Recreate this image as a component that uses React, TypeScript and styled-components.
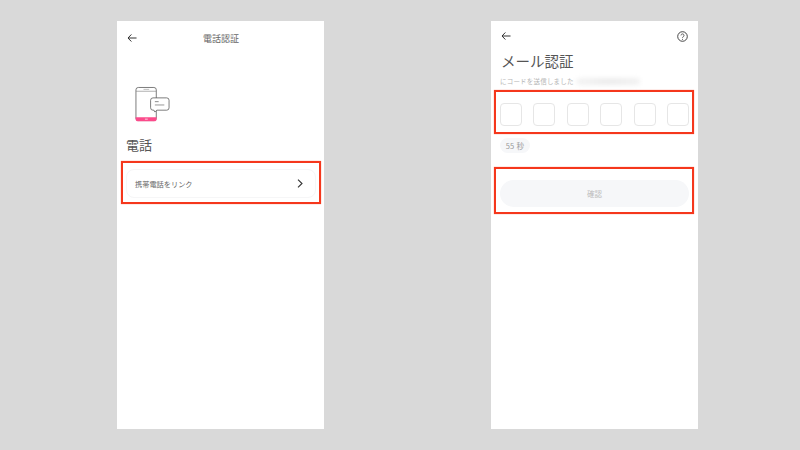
import styled, { createGlobalStyle } from 'styled-components'

const GlobalStyle = createGlobalStyle`
  html, body {
    margin: 0;
    padding: 0;
    background: #d9d9d9;
  }
  * {
    box-sizing: border-box;
  }
`

const Page = styled.div`
  width: 800px;
  height: 450px;
  overflow: hidden;
  display: flex;
  gap: 167px;
  padding: 21px 0 0 117px;
  background: #d9d9d9;
  font-family: 'Noto Sans CJK JP', 'Noto Sans', sans-serif;
`

const Screen = styled.div`
  width: 207px;
  height: 408px;
  background: #fff;
  display: flex;
  flex-direction: column;
`

const CenterHeader = styled.div`
  position: relative;
  height: 34px;
  margin-bottom: 2px;
  display: flex;
  align-items: center;
  justify-content: center;
  padding: 2px 0 0 1px;
`

const BackButton = styled.div`
  position: absolute;
  left: 10px;
  top: 12px;
  width: 10px;
  height: 10px;
  display: flex;
`

const HeaderTitle = styled.div`
  font-size: 9px;
  line-height: 12px;
  color: #666;
`

const PhoneArt = styled.div`
  margin: 29px 0 0 18px;
  width: 35px;
  height: 37px;
`

const SectionTitle = styled.div`
  margin: 13px 0 0 9px;
  font-size: 13px;
  line-height: 18px;
  color: #555;
`

const Highlight = styled.div<{ $h: number; $top: number; $left: number }>`
  margin: ${(p) => p.$top}px 0 0 ${(p) => p.$left}px;
  width: 200px;
  height: ${(p) => p.$h}px;
  border: 2px solid #f5371c;
  box-shadow: 0 0 1px rgba(245, 55, 28, 0.6);
  flex-shrink: 0;
`

const LinkRow = styled.div`
  margin: 6px 3px 0 3px;
  height: 29px;
  border: 1px solid #f6f6f7;
  border-radius: 8px;
  display: flex;
  align-items: center;
  justify-content: space-between;
  padding: 0 12px 0 8px;
  font-size: 7.2px;
  color: #666;
`

const Chevron = styled.svg`
  width: 6px;
  height: 9px;
  display: block;
`

const TopRow = styled.div`
  height: 30px;
  display: flex;
  align-items: center;
  justify-content: space-between;
  padding: 0 10px 0 10px;
`

const MailTitle = styled.div`
  margin-left: 10px;
  font-size: 14.5px;
  line-height: 20px;
  color: #555;
`

const SubRow = styled.div`
  margin: 4px 0 0 9px;
  height: 12px;
  display: flex;
  align-items: center;
  gap: 2px;
  font-size: 6.5px;
  letter-spacing: 0.2px;
  color: #b5b5b5;
`

const BlurredMail = styled.div`
  width: 64px;
  height: 7px;
  border-radius: 3px;
  background: linear-gradient(90deg, #f4f4f4, #ececec 50%, #f2f2f2);
  filter: blur(2px);
`

const CodeRow = styled.div`
  display: flex;
  justify-content: space-between;
  padding: 11px 3px 0 4px;
`

const CodeCell = styled.div`
  width: 22px;
  height: 23px;
  border: 1px solid #e6e6e6;
  border-radius: 4px;
`

const TimerPill = styled.div`
  margin: 4px 0 0 9px;
  width: 30px;
  height: 15px;
  border-radius: 8px;
  background: #f6f7f9;
  color: #9a9a9a;
  font-size: 7.5px;
  letter-spacing: 0.3px;
  display: flex;
  align-items: center;
  justify-content: center;
`

const ConfirmButton = styled.div`
  margin: 11px 3px 0 4px;
  height: 27px;
  border-radius: 14px;
  background: #f6f7f9;
  color: #bdbdbd;
  font-size: 7.5px;
  display: flex;
  align-items: center;
  justify-content: center;
`

const BackArrow = () => (
  <svg width="10" height="10" viewBox="0 0 11 11" fill="none" stroke="#333" strokeWidth="1.1">
    <path d="M10.5 5.5H1.2M4.8 1.6L1.1 5.5l3.7 3.9" />
  </svg>
)

const PhoneIcon = () => (
  <svg width="35" height="37" viewBox="0 0 37 38" fill="none">
    <rect x="1" y="1" width="21.5" height="35" rx="2.5" stroke="#666" strokeWidth="0.9" />
    <path d="M1 5h21.5" stroke="#888" strokeWidth="0.7" />
    <path d="M9 3h6" stroke="#aaa" strokeWidth="0.8" />
    <path d="M0.6 32.5h22.3v1.5a2.8 2.8 0 0 1-2.8 2.8H3.4a2.8 2.8 0 0 1-2.8-2.8z" fill="#fb4b8b" />
    <path d="M10.5 34.5h3" stroke="#fbd0e0" strokeWidth="1" />
    <path
      d="M19 12h14.5a2.5 2.5 0 0 1 2.5 2.5v8a2.5 2.5 0 0 1-2.5 2.5H23l-2 2-1-2h-1a2.5 2.5 0 0 1-2.5-2.5v-8A2.5 2.5 0 0 1 19 12z"
      fill="#fff"
      stroke="#666"
      strokeWidth="0.9"
    />
    <path d="M21 16h4" stroke="#666" strokeWidth="0.8" />
    <path d="M21 19.5h10" stroke="#777" strokeWidth="0.8" />
  </svg>
)

export default function App() {
  return (
    <>
      <GlobalStyle />
      <Page>
        <Screen>
          <CenterHeader>
            <BackButton>
              <BackArrow />
            </BackButton>
            <HeaderTitle>電話認証</HeaderTitle>
          </CenterHeader>
          <PhoneArt>
            <PhoneIcon />
          </PhoneArt>
          <SectionTitle>電話</SectionTitle>
          <Highlight $h={43} $top={7} $left={4}>
            <LinkRow>
              携帯電話をリンク
              <Chevron viewBox="0 0 6 9" fill="none" stroke="#333" strokeWidth="1.1">
                <path d="M1 0.6L5 4.5 1 8.4" />
              </Chevron>
            </LinkRow>
          </Highlight>
        </Screen>
        <Screen>
          <TopRow>
            <BackArrow />
            <svg width="11" height="11" viewBox="0 0 11 11" fill="none">
              <circle cx="5.5" cy="5.5" r="4.8" stroke="#333" strokeWidth="0.9" />
              <path d="M4 4.4a1.5 1.5 0 1 1 2.3 1.3c-.5.3-.8.6-.8 1.1" stroke="#333" strokeWidth="0.8" />
              <circle cx="5.5" cy="8.2" r="0.5" fill="#333" />
            </svg>
          </TopRow>
          <MailTitle>メール認証</MailTitle>
          <SubRow>
            にコードを送信しました
            <BlurredMail />
          </SubRow>
          <Highlight $h={44} $top={3} $left={3}>
            <CodeRow>
              {[0, 1, 2, 3, 4, 5].map((i) => (
                <CodeCell key={i} />
              ))}
            </CodeRow>
          </Highlight>
          <TimerPill>55 秒</TimerPill>
          <Highlight $h={47} $top={14} $left={3}>
            <ConfirmButton>確認</ConfirmButton>
          </Highlight>
        </Screen>
      </Page>
    </>
  )
}
